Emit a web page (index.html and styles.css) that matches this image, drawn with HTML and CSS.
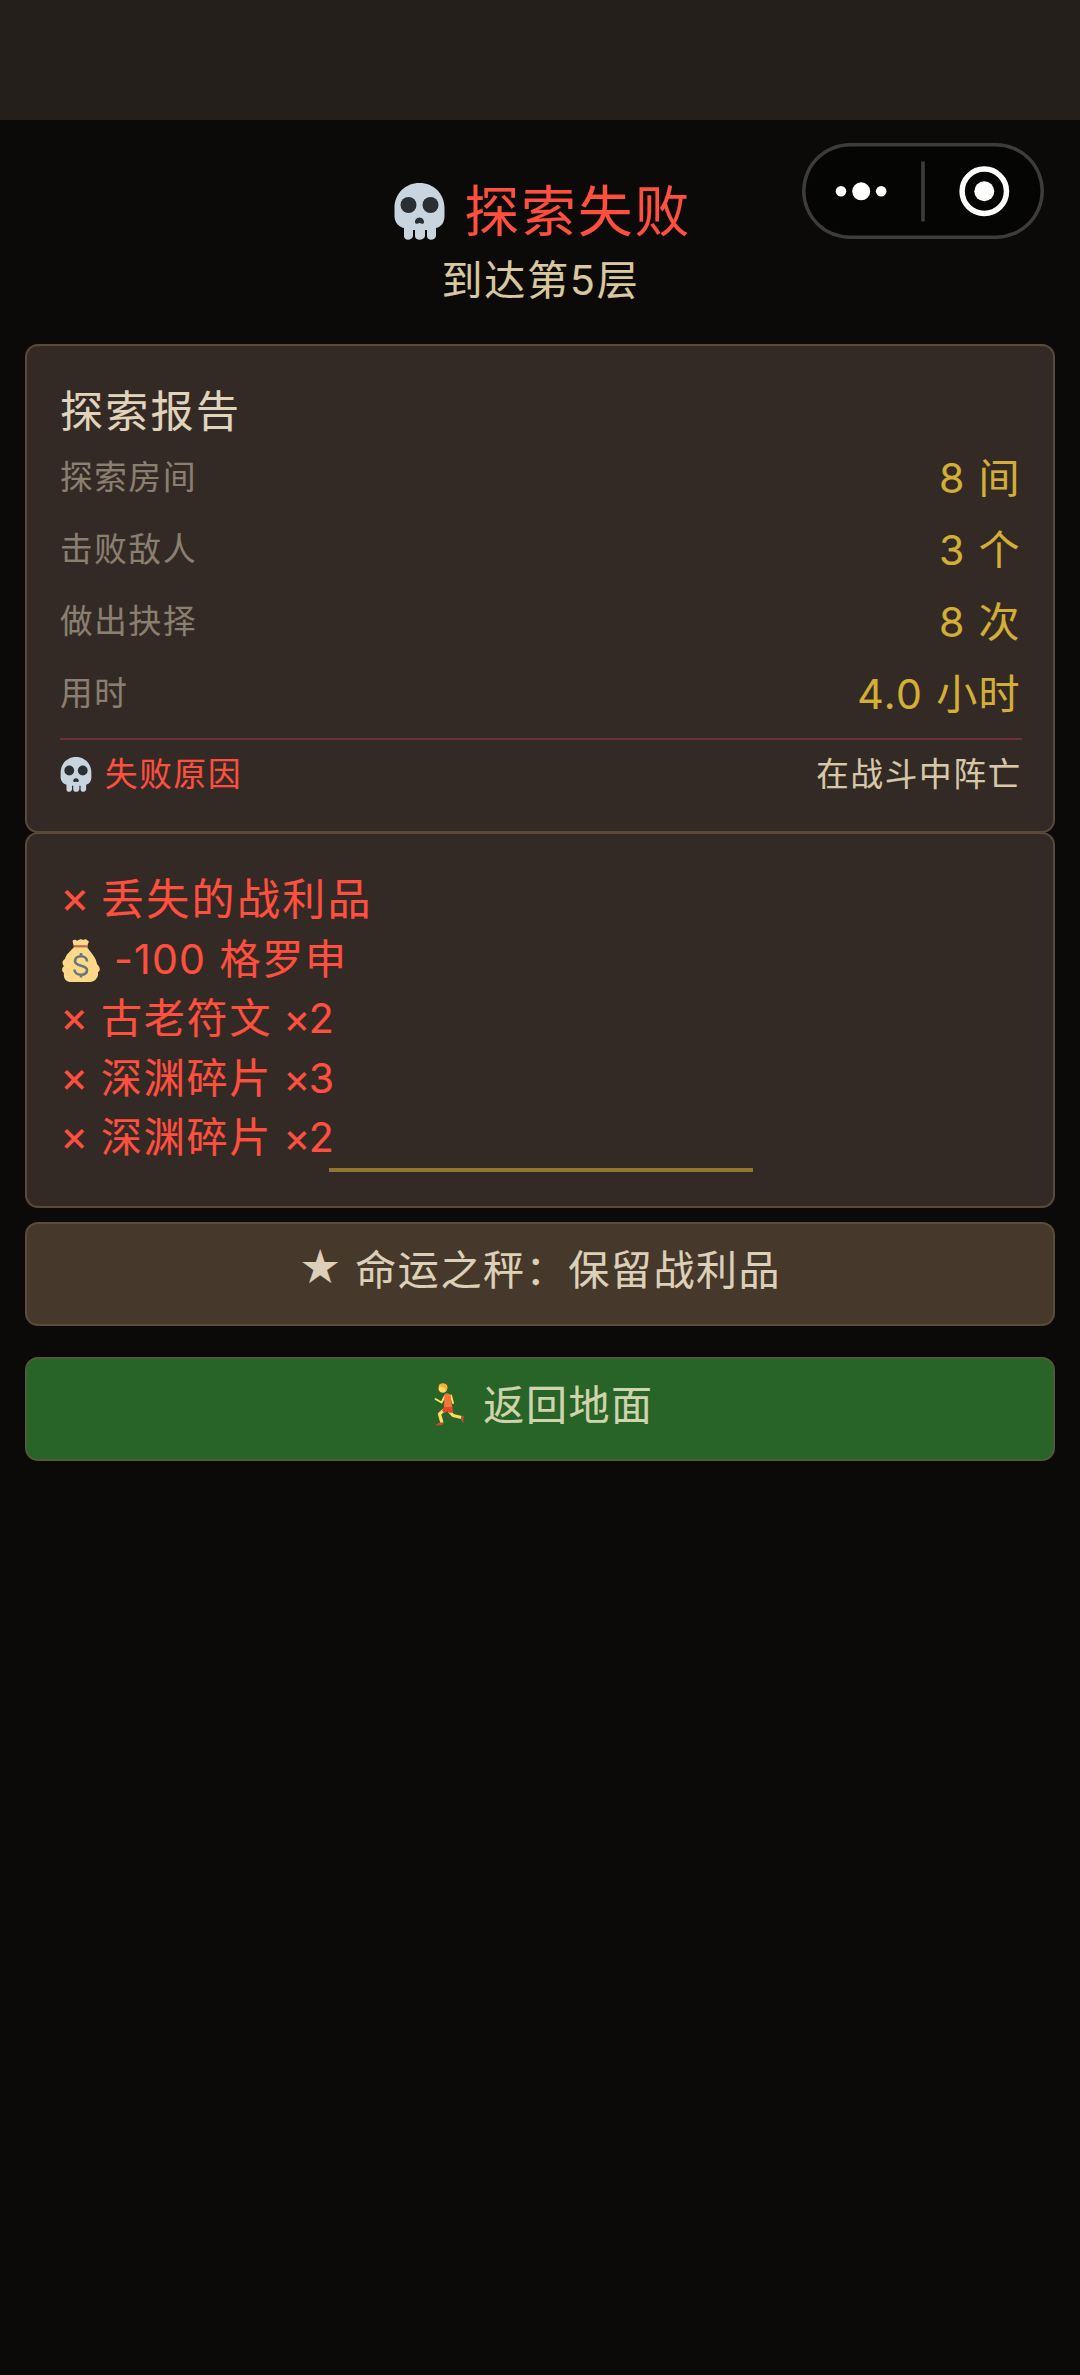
FILE: index.html
```html
<!DOCTYPE html>
<html lang="zh-CN">
<head>
<meta charset="utf-8">
<title>探索失败</title>
<link rel="stylesheet" href="styles.css">
</head>
<body>
<svg class="defs" width="0" height="0" aria-hidden="true">
  <symbol id="skull" viewBox="0 0 50 57">
    <path fill="#c9d5de" d="M25 0C11 0 0 10.500 0 25v8c0 6 4 11 9.500 12v8c0 5 8 5 9 0v-6h2v6c0 5 9 5 10 0v-6h2v6c0 5 8 5 9 0v-8C47 44 50 39 50 33v-8C50 10.500 39 0 25 0z"/>
    <circle cx="14" cy="22" r="8" fill="#292f33"/><circle cx="36" cy="22" r="8" fill="#292f33"/>
    <path fill="#292f33" d="M25 34.500c-3 0-5 3-4.500 5 .4 1.800 3 1.500 4.500.3 1.500 1.200 4.100 1.500 4.500-.3.500-2-1.500-5-4.500-5z"/>
  </symbol>
  <symbol id="bag" viewBox="0 0 38 43">
    <path fill="#fdd888" d="M12 8l-1.500-6c3-3 4 1 6-1 3-2 4 1 6-.500C25-.500 26 3 27 2l-2 6c4 6 9 10 10 17 4 4 3 7 1 8 1 5-3 10-8 10H9c-5 0-8-4-7-9-3-2-2-5 0-7-3-3-1-6 1-7 1-5 6-8 9-12z"/>
    <path fill="#bf6952" d="M12 6.200h14v2.200H12z"/>
    <path fill="none" stroke="#67757f" stroke-width="2.600" d="M25 22.500c0-3.300-2.500-5.200-6-5.200-3.700 0-6 1.900-6 4.700 0 6 12 3.500 12 9 0 3-2.500 4.700-6 4.700-4 0-6.500-2-6.500-5.300M19 14v3.500M19 35v3.500"/>
  </symbol>
  <symbol id="runner" viewBox="0 0 30 43">
    <path fill="none" stroke="#ffdc5d" stroke-width="2" stroke-linejoin="round" stroke-linecap="round" d="M11 13l-3.500 6.500-6-3.500M17 12.500l2 7.500"/>
    <path fill="none" stroke="#ffdc5d" stroke-width="3.200" stroke-linejoin="round" d="M11 26l-5.500 5 2.500 9M15 28l4 4.500 8.500 2"/>
    <circle cx="8.800" cy="5.400" r="4.300" fill="#ffdc5d"/>
    <path fill="#ffac33" d="M4.500 3.500C5-.500 12.500-1 13.500 3.500c.3 3-1 4.500-2 4.500 0-3-2-4.500-7-4.500z"/>
    <path fill="#f4743b" d="M10.500 11c2-1.500 5-1 6 1.500L18.300 24.500H10z"/>
    <path fill="#e2482d" d="M10 24h8.500l.500 5.500-3.500.5-2-1.500-3 1.500-2.500-2.500z"/>
    <path fill="#c1502e" d="M27 33.500l2.500-1v7c-2 0-2.500-2-2.500-6zM6.500 39.500h3l-.5 2.300-7 .9c-.3-1.700 2-2.200 4.500-3.200z"/>
  </symbol>
</svg>

<div class="status-bar"></div>

<div class="capsule">
  <svg class="capsule-icon" viewBox="0 0 242 96">
    <g fill="#fff"><circle cx="39" cy="48.300" r="5.300"/><circle cx="59.200" cy="48.300" r="9"/><circle cx="79.200" cy="48.300" r="5.300"/><circle cx="182.300" cy="48.300" r="10"/></g>
    <circle cx="182.300" cy="48.300" r="22.200" fill="none" stroke="#fff" stroke-width="5.500"/>
    <path d="M121 18.500v60" stroke="#3d3c3b" stroke-width="3.600"/>
  </svg>
</div>

<main class="page">
  <header class="hero">
    <h1 class="title"><svg class="title-icon"><use href="#skull"/></svg><span>探索失败</span></h1>
    <p class="subtitle">到达第5层</p>
  </header>

  <section class="card report">
    <h2 class="card-title">探索报告</h2>
    <div class="row"><span class="label">探索房间</span><span class="value">8 间</span></div>
    <div class="row"><span class="label">击败敌人</span><span class="value">3 个</span></div>
    <div class="row"><span class="label">做出抉择</span><span class="value">8 次</span></div>
    <div class="row"><span class="label">用时</span><span class="value">4.0 小时</span></div>
    <div class="reason">
      <span class="reason-label"><svg class="reason-icon"><use href="#skull"/></svg><span>失败原因</span></span>
      <span class="reason-text">在战斗中阵亡</span>
    </div>
  </section>

  <section class="card loot">
    <h2 class="loot-title"><span class="mark">×</span><span>丢失的战利品</span></h2>
    <div class="loot-item money"><svg class="bag-icon"><use href="#bag"/></svg><span><span class="amount">-100</span> 格罗申</span></div>
    <div class="loot-item"><span class="mark">×</span><span>古老符文</span><span class="count">×2</span></div>
    <div class="loot-item third"><span class="mark">×</span><span>深渊碎片</span><span class="count">×3</span></div>
    <div class="loot-item"><span class="mark">×</span><span>深渊碎片</span><span class="count">×2</span></div>
    <div class="accent"></div>
  </section>

  <button class="button keep"><span class="star">★</span><span>命运之秤：保留战利品</span></button>
  <button class="button back"><svg class="runner-icon"><use href="#runner"/></svg><span>返回地面</span></button>
</main>
</body>
</html>
```
FILE: styles.css
```css
* { box-sizing: border-box; }

body {
  margin: 0;
  min-height: 2375px;
  background: #0b0a08;
  font-family: "Inter", "Noto Sans CJK SC", sans-serif;
  font-weight: 400;
  -webkit-text-stroke: 0.150px currentColor;
  white-space: nowrap;
  position: relative;
}

h1, h2, p { margin: 0; font-weight: 400; }
svg { display: block; flex: none; }
.defs { position: absolute; }

.status-bar { height: 120px; background: #241f1b; }

.capsule {
  position: absolute;
  top: 143px;
  left: 802px;
  width: 242px;
  height: 96px;
  border-radius: 48px;
  background: #050504;
  box-shadow: inset 0 0 0 3.500px #3d3c3b;
}
.capsule-icon { width: 242px; height: 96px; }

.page { padding: 0 25px; }

.hero {
  height: 224px;
  padding-top: 56px;
  display: flex;
  flex-direction: column;
  align-items: center;
}
.title {
  display: flex;
  align-items: center;
  gap: 20px;
  height: 70px;
  padding-left: 5px;
  line-height: 70px;
  font-size: 54.500px;
  letter-spacing: 2.200px;
  color: #ff4f3e;
}
.title-icon { width: 51px; height: 57px; }
.subtitle {
  height: 68px;
  line-height: 68px;
  padding-left: 1px;
  font-size: 41px;
  letter-spacing: 1.800px;
  color: #d8c8a0;
}

.card {
  width: 1030px;
  border: 2px solid #5a4a3a;
  border-radius: 13px;
  background: #332a26;
  padding: 0 31px 0 33px;
}

.report { height: 489px; padding-top: 35px; }
.card-title {
  height: 61px;
  line-height: 60px;
  font-size: 43px;
  letter-spacing: 2.300px;
  color: #e0d4bc;
}
.row {
  display: flex;
  align-items: center;
  justify-content: space-between;
  height: 72px;
  line-height: 72px;
}
.label { font-size: 32.500px; letter-spacing: 1.800px; color: #8b7f70; }
.value { margin-right: 1px; font-size: 41px; letter-spacing: 1.400px; color: #d4af37; }
.reason {
  display: flex;
  align-items: center;
  justify-content: space-between;
  margin-top: 8px;
  height: 71px;
  border-top: 2px solid #6b3331;
  line-height: 68px;
  font-size: 32.500px;
  letter-spacing: 1.800px;
}
.reason-label { display: flex; align-items: center; gap: 13px; color: #ff4f3e; }
.reason-icon { width: 32px; height: 35px; }
.reason-text { color: #d8c8a8; }

.loot {
  position: relative;
  height: 376px;
  margin-top: -1px;
  padding-top: 34px;
  color: #ff4f3e;
}
.loot-title,
.loot-item { display: flex; align-items: center; }
.loot-title { height: 62px; line-height: 62px; font-size: 43px; letter-spacing: 2.300px; }
.loot-item { height: 59px; line-height: 59px; font-size: 41px; letter-spacing: 1.800px; }
.loot-item.third { height: 60px; }
.mark { width: 41px; padding-bottom: 4px; font-size: 1.040em; letter-spacing: 0; }
.count { padding-left: 11px; letter-spacing: -1.500px; }
.amount { letter-spacing: 1.200px; }
.money { gap: 14px; }
.bag-icon { width: 38px; height: 43px; margin-left: 2px; margin-top: 1px; }
.accent {
  position: absolute;
  left: 302px;
  top: 334px;
  width: 424px;
  height: 4px;
  background: #90762f;
}

.button {
  display: flex;
  align-items: center;
  justify-content: center;
  gap: 12px;
  width: 1030px;
  height: 104px;
  margin: 0;
  padding: 0 0 14px;
  border: 2px solid #5c4c3b;
  border-radius: 13px;
  font: inherit;
  font-size: 41px;
  letter-spacing: 1.600px;
  color: #ddd0b8;
}
.keep { margin-top: 14px; background: #46382b; }
.back { margin-top: 31px; padding-left: 8px; gap: 19px; background: #286428; border-color: #505a35; color: #cfd4ad; }
.star { line-height: 60px; padding-top: 2px; }
.runner-icon { width: 30px; height: 43px; margin-top: 4px; }
```
